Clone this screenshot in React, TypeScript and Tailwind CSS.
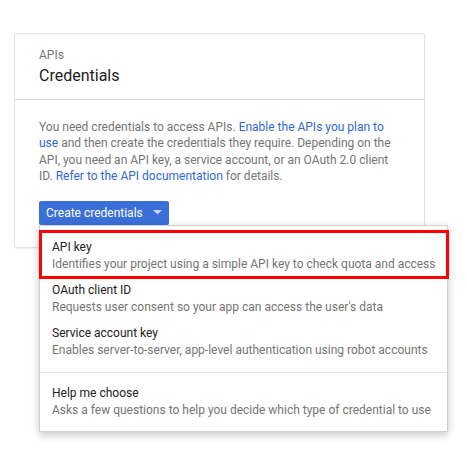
import React from 'react'

const items = [
  { title: 'API key', desc: 'Identifies your project using a simple API key to check quota and access', marked: true },
  { title: 'OAuth client ID', desc: "Requests user consent so your app can access the user's data" },
  { title: 'Service account key', desc: 'Enables server-to-server, app-level authentication using robot accounts' },
]

function MenuItem({ title, desc, marked }: { title: string; desc: string; marked?: boolean }) {
  return (
    <div className="relative whitespace-nowrap px-[12px] pt-[4px] pb-[5px]">
      <div className="text-[12px] leading-[17px] text-[#212121]">{title}</div>
      <div className="text-[12px] leading-[17px] text-[#757575]">{desc}</div>
      {marked && (
        <div className="pointer-events-none absolute top-[-5px] bottom-[-1px] left-[-1px] right-[-2px] border-[3px] border-[#ff0000]" />
      )}
    </div>
  )
}

export default function App() {
  return (
    <div className="min-h-[467px] bg-white pt-[33px] pl-[14px]" style={{ fontFamily: 'Roboto, "Liberation Sans", sans-serif' }}>
      <div className="w-[411px] rounded-[2px] border border-[#e2e2e2] bg-white shadow-[0_1px_2px_rgba(0,0,0,0.06)]">
        {/* header */}
        <div className="border-b border-[#d6d6d6] px-[24px] pt-[13px] pb-[12px]">
          <div className="text-[12px] leading-[16px] text-[#757575]">APIs</div>
          <div className="mt-[1px] text-[16px] leading-[23px] text-[#212121]">Credentials</div>
        </div>

        <div className="px-[24px] pt-[19px] pb-[22px]">
          <p className="w-[362px] text-[12px] leading-[16.4px] text-[#757575]">
            You need credentials to access APIs. <span className="text-[#3367d6]">Enable the APIs you plan to use</span> and
            then create the credentials they require. Depending on the API, you need an API key, a service account, or an
            OAuth 2.0 client ID. <span className="text-[#3367d6]">Refer to the API documentation</span> for details.
          </p>

          <div className="relative mt-[16px]">
            <button className="flex h-[24px] w-[130px] items-center whitespace-nowrap rounded-[2px] bg-[#3b6fd8] pl-[7px] text-[12px] text-white">
              Create credentials
              <svg width="9" height="5" viewBox="0 0 9 5" className="ml-[10px]">
                <path d="M0 0h9L4.5 4.5z" fill="#c5d4f3" />
              </svg>
            </button>

            {/* dropdown */}
            <div className="absolute left-0 top-[24px] z-10 w-[409px] border border-[#d0d0d0] bg-white pt-[9px] pb-[7px] shadow-[0_3px_8px_rgba(0,0,0,0.22)]">
              {items.map((it) => (
                <MenuItem key={it.title} {...it} />
              ))}
              <div className="my-[8px] border-t border-[#e4e4e4]" />
              <MenuItem title="Help me choose" desc="Asks a few questions to help you decide which type of credential to use" />
            </div>
          </div>
        </div>
      </div>
    </div>
  )
}
